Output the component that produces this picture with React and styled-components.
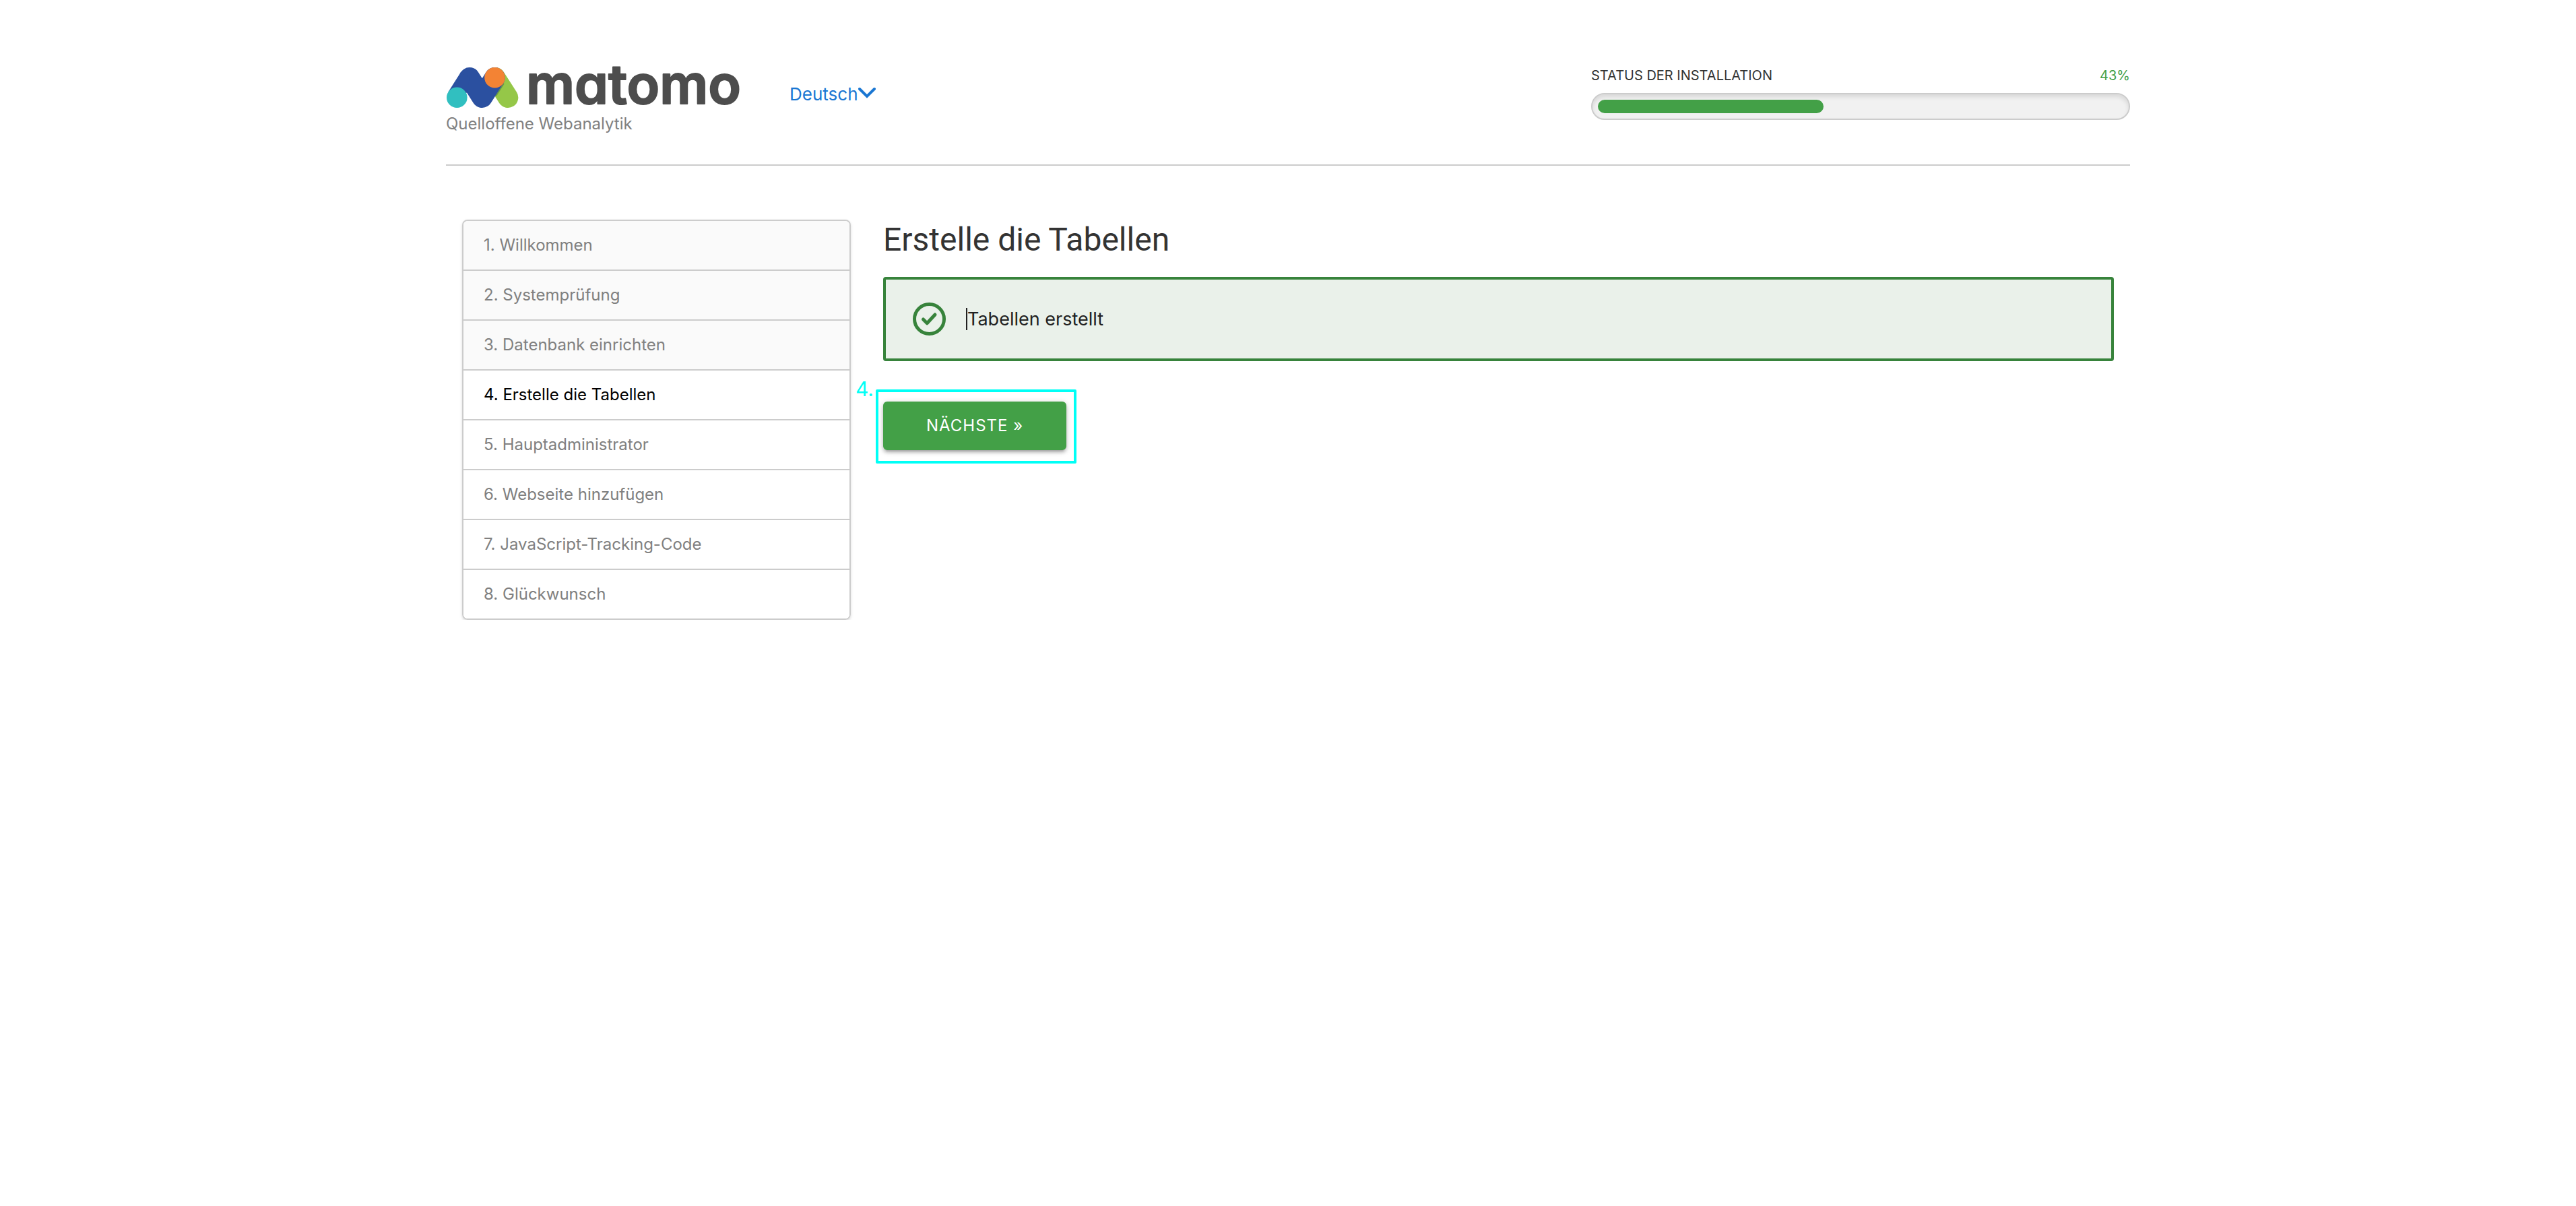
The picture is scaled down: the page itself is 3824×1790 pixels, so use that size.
import React from "react";
import styled, { createGlobalStyle } from "styled-components";

const GlobalStyle = createGlobalStyle`
  *, *::before, *::after { box-sizing: border-box; }
  body {
    margin: 0;
    background: #fff;
    color: #212121;
    font-family: Inter, Roboto, "Liberation Sans", sans-serif;
    font-size: 24px;
    line-height: 32px;
  }
`;

const Page = styled.div`
  max-width: 2500px;
  margin: 0 auto;
`;

const Header = styled.header`
  display: flex;
  align-items: flex-start;
  padding: 76px 0 44px;
  border-bottom: 2px solid #ccc;
`;

const Brand = styled.div`
  width: 442px;
`;

const LogoImage = styled.svg`
  display: block;
  width: 442px;
  height: 92px;
  overflow: visible;
`;

const Wordmark = styled.text`
  font-family: Inter, sans-serif;
  font-size: 80px;
  font-weight: 600;
  font-feature-settings: "cv11";
  fill: #4d4d4d;
  stroke: #4d4d4d;
  stroke-width: 2px;
  stroke-linejoin: round;
`;

const Tagline = styled.p`
  margin: 0;
  color: #808080;
`;

const LanguageButton = styled.button`
  display: flex;
  align-items: center;
  margin: 48px 0 0 68px;
  padding: 0;
  border: 0;
  background: none;
  color: #1976d2;
  font: inherit;
  font-size: 26px;
  cursor: pointer;
`;

const Status = styled.section`
  width: 32%;
  margin-left: auto;
  padding-top: 20px;
`;

const StatusText = styled.div`
  display: flex;
  justify-content: space-between;
  margin-bottom: 10px;
  color: #333;
  font-size: 20px;
  text-transform: uppercase;
`;

const Percent = styled.span`
  color: #43a047;
`;

const Track = styled.div`
  height: 40px;
  padding: 8px;
  border: 2px solid #ccc;
  border-radius: 20px;
  background: #f1f1f1;
  box-shadow: inset 0 4px 6px rgba(0, 0, 0, 0.1);
`;

const Bar = styled.div`
  height: 20px;
  border-radius: 10px;
  background: #43a047;
`;

const Columns = styled.div`
  display: grid;
  grid-template-columns: 1fr 3fr;
  padding-top: 80px;
`;

const Column = styled.div`
  min-width: 0;
  padding: 0 24px;
`;

const Steps = styled.ol`
  margin: 0;
  padding: 0;
  overflow: hidden;
  list-style: none;
  border: 2px solid #ccc;
  border-radius: 8px;
  box-shadow: 0 2px 4px rgba(0, 0, 0, 0.14);
`;

const stepColours = {
  done: { text: "#808080", back: "#fafafa" },
  current: { text: "#000", back: "#fff" },
  todo: { text: "#808080", back: "#fff" },
};

const Step = styled.li`
  padding: 20px 30px;
  color: ${(p) => stepColours[p.$state].text};
  background: ${(p) => stepColours[p.$state].back};

  & + & {
    border-top: 2px solid #ccc;
  }
`;

const Title = styled.h1`
  margin: 0 0 25px;
  color: #333;
  font-family: Roboto, Inter, sans-serif;
  font-size: 48px;
  font-weight: 400;
  line-height: 60px;
`;

const Alert = styled.div`
  display: flex;
  align-items: center;
  gap: 30px;
  height: 125px;
  margin-bottom: 60px;
  padding: 0 40px;
  border: 4px solid #37833b;
  border-radius: 4px;
  background: #eaf1ea;
  font-size: 27px;
`;

const AlertText = styled.span`
  display: flex;
  align-items: center;
`;

const Caret = styled.span`
  width: 2px;
  height: 33px;
  background: #212121;
`;

const Action = styled.div`
  position: relative;
  display: inline-block;
`;

const NextButton = styled.button`
  display: block;
  height: 72px;
  padding: 0 64px;
  border: 0;
  border-radius: 6px;
  background: #43a047;
  box-shadow: 0 4px 4px rgba(0, 0, 0, 0.14), 0 6px 2px -4px rgba(0, 0, 0, 0.12),
    0 2px 10px rgba(0, 0, 0, 0.2);
  color: #fff;
  font: inherit;
  letter-spacing: 1px;
  text-transform: uppercase;
  cursor: pointer;
`;

const Highlight = styled.div`
  position: absolute;
  inset: -18px -15px -20px -11px;
  border: 4px solid #00fff6;
  border-radius: 2px;
  pointer-events: none;
`;

const HighlightNumber = styled.span`
  position: absolute;
  top: -35px;
  left: -41px;
  color: #00fff6;
  font-size: 30px;
  pointer-events: none;
`;

const steps = [
  "Willkommen",
  "Systemprüfung",
  "Datenbank einrichten",
  "Erstelle die Tabellen",
  "Hauptadministrator",
  "Webseite hinzufügen",
  "JavaScript-Tracking-Code",
  "Glückwunsch",
];
const currentStep = 3;
const progress = 43;

function stateOf(index) {
  if (index < currentStep) return "done";
  return index === currentStep ? "current" : "todo";
}

function Logo() {
  return (
    <LogoImage viewBox="0 -20 442 92" role="img" aria-label="matomo">
      <g fill="none" strokeWidth="30.6" strokeLinecap="round" strokeLinejoin="round">
        <path stroke="#95c748" d="M73 19.3 L92 48.7" />
        <path stroke="#2b50a0" d="M35 19.3 L53.7 48.7 L72.5 19.3" />
      </g>
      <path fill="#2b50a0" d="M3.4 40.4 L22.1 11 L35 19.3 L31 41.6 L16.3 48.7 Z" />
      <path
        d="M86 28 L74.5 46"
        fill="none"
        stroke="#4c7a45"
        strokeWidth="1.5"
        strokeOpacity="0.6"
      />
      <circle cx="16.3" cy="48.7" r="15.3" fill="#31bfc0" />
      <circle cx="72.5" cy="19.3" r="15.3" fill="#f38334" />
      <Wordmark x="119" y="58">matomo</Wordmark>
    </LogoImage>
  );
}

export default function App() {
  return (
    <>
      <GlobalStyle />
      <Page>
        <Header>
          <Brand>
            <Logo />
            <Tagline>Quelloffene Webanalytik</Tagline>
          </Brand>
          <LanguageButton type="button">
            Deutsch
            <svg width="26" height="32" viewBox="0 0 26 32" aria-hidden="true">
              <path
                d="M2 8 L13 19 L24 8"
                fill="none"
                stroke="currentColor"
                strokeWidth="4"
                strokeLinecap="round"
              />
            </svg>
          </LanguageButton>
          <Status>
            <StatusText>
              <span id="status-label">Status der Installation</span>
              <Percent>{progress}%</Percent>
            </StatusText>
            <Track
              role="progressbar"
              aria-labelledby="status-label"
              aria-valuemin={0}
              aria-valuemax={100}
              aria-valuenow={progress}
            >
              <Bar style={{ width: `${progress}%` }} />
            </Track>
          </Status>
        </Header>
        <Columns>
          <Column as="nav">
            <Steps>
              {steps.map((name, i) => (
                <Step
                  key={name}
                  $state={stateOf(i)}
                  aria-current={i === currentStep ? "step" : undefined}
                >
                  {i + 1}. {name}
                </Step>
              ))}
            </Steps>
          </Column>
          <Column as="main">
            <Title>Erstelle die Tabellen</Title>
            <Alert role="status">
              <svg width="49" height="49" viewBox="0 0 49 49" aria-hidden="true">
                <g fill="none" stroke="#37833b" strokeLinecap="round" strokeLinejoin="round">
                  <circle cx="24.5" cy="24.5" r="22" strokeWidth="5" />
                  <path d="M15.5 25 L21.2 30.8 L33 18" strokeWidth="5" />
                </g>
              </svg>
              <AlertText>
                <Caret />
                Tabellen erstellt
              </AlertText>
            </Alert>
            <Action>
              <NextButton type="button">Nächste »</NextButton>
              <Highlight />
              <HighlightNumber>4.</HighlightNumber>
            </Action>
          </Column>
        </Columns>
      </Page>
    </>
  );
}
